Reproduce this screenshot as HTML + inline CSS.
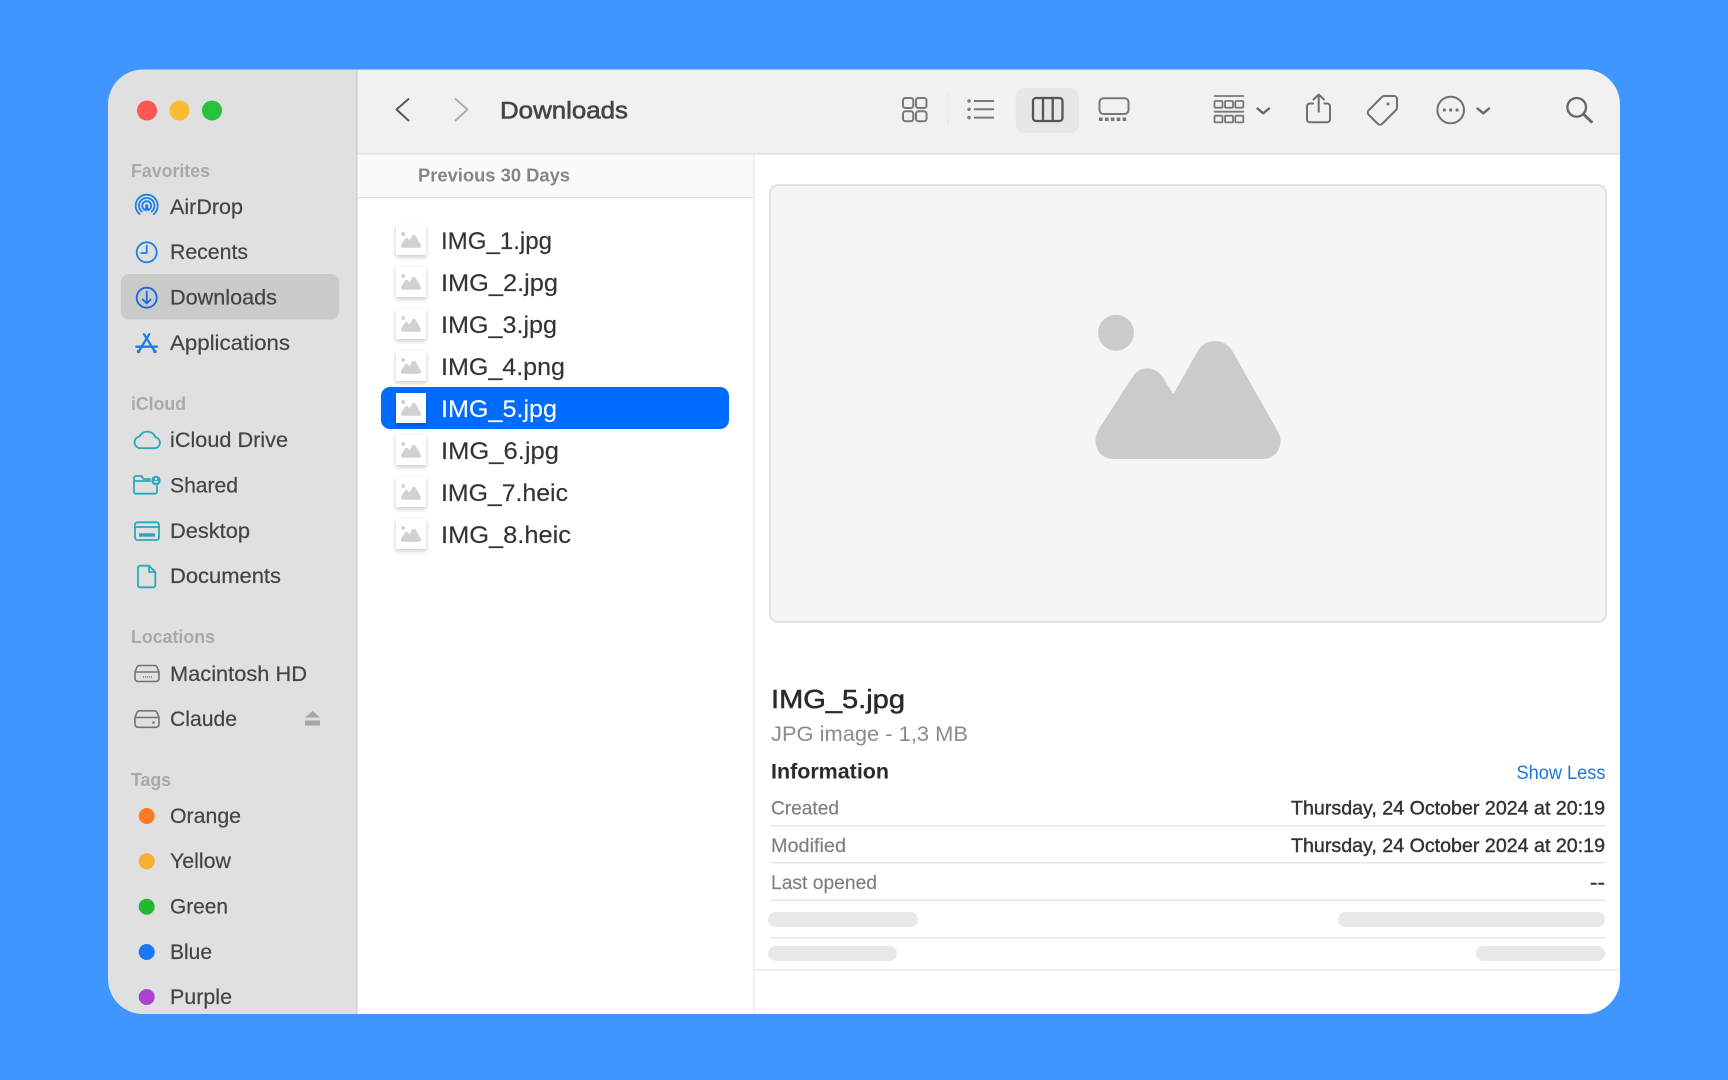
<!DOCTYPE html>
<html><head><meta charset="utf-8"><title>Finder - Downloads</title>
<style>
html,body{margin:0;padding:0;background:#3f96ff;width:1728px;height:1080px;overflow:hidden}
svg{display:block;position:absolute;left:0;top:0;filter:blur(.3px)}
text{font-family:"Liberation Sans",Arial,sans-serif;white-space:pre}
.s{font-size:21px;fill:#444;stroke:#444;stroke-width:.2px}
.h{font-size:18px;fill:#a9a9a9;font-weight:700}
.f{font-size:24.5px;fill:#333;stroke:#333;stroke-width:.15px}
.l{font-size:19px;fill:#7e7e7e;stroke:#7e7e7e;stroke-width:.15px}
.v{font-size:19px;fill:#333;stroke:#333;stroke-width:.4px}
.ic{fill:none;stroke-linecap:round;stroke-linejoin:round}
.fi{filter:drop-shadow(0 2px 2px rgba(0,0,0,.22))}
</style></head>
<body>
<svg width="1728" height="1080" viewBox="0 0 1728 1080" xmlns="http://www.w3.org/2000/svg">
<defs>
<clipPath id="win"><rect x="108" y="69.500" width="1512" height="944.500" rx="35"/></clipPath>
<g id="mt"><circle cx="1116" cy="332.700" r="18"/><path d="M1113 459H1263C1277 459 1285 444 1278 431.700L1231.700 350C1224 338 1206 338 1198.300 350L1173.300 394.300L1163.300 378.300C1156 365 1139 365 1131.700 378.300L1098.300 430C1091 444 1099 459 1113 459Z"/></g>
<g id="fic"><rect class="fi" x="396" y="225" width="30" height="30" fill="#fff"/><g fill="#d1d1d3" transform="translate(401 247.700) scale(.1087) translate(-1096 -459)"><use href="#mt"/></g></g>
</defs>
<g clip-path="url(#win)">
<rect x="357" y="150" width="1264" height="865" fill="#fff"/>
<rect x="108" y="69" width="249" height="945" fill="#e0e0e0"/>
<rect x="356" y="69" width="1.500" height="945" fill="#cfcfcf"/>
<rect x="357.500" y="69" width="1263" height="84" fill="#f2f1f1"/>
<rect x="357.500" y="153" width="1263" height="1.500" fill="#e1e1e1"/>
<rect x="357.500" y="154.500" width="396" height="42" fill="#fbfbfb"/>
<rect x="357.500" y="197" width="396" height="1.200" fill="#e2e2e2"/>
<rect x="753" y="154" width="1.500" height="860" fill="#ebebeb"/>
<rect x="754.500" y="969.300" width="866" height="1.300" fill="#e6e6e6"/>

<!-- traffic lights -->
<circle cx="147" cy="110.500" r="10" fill="#fb5753"/>
<circle cx="179.500" cy="110.500" r="10" fill="#fdbb33"/>
<circle cx="212" cy="110.500" r="10" fill="#2ac13f"/>

<!-- sidebar selection -->
<rect x="121" y="274" width="218" height="45.500" rx="8" fill="#c9caca"/>

<!-- sidebar text -->
<text class="h" x="131" y="177" textLength="79" lengthAdjust="spacingAndGlyphs">Favorites</text>
<text class="s" x="170" y="214" textLength="73" lengthAdjust="spacingAndGlyphs">AirDrop</text>
<text class="s" x="170" y="259" textLength="78" lengthAdjust="spacingAndGlyphs">Recents</text>
<text class="s" x="170" y="304.500" textLength="107" lengthAdjust="spacingAndGlyphs">Downloads</text>
<text class="s" x="170" y="350" textLength="120" lengthAdjust="spacingAndGlyphs">Applications</text>
<text class="h" x="131" y="410" textLength="55" lengthAdjust="spacingAndGlyphs">iCloud</text>
<text class="s" x="170" y="447" textLength="118" lengthAdjust="spacingAndGlyphs">iCloud Drive</text>
<text class="s" x="170" y="492.500" textLength="68" lengthAdjust="spacingAndGlyphs">Shared</text>
<text class="s" x="170" y="538" textLength="80" lengthAdjust="spacingAndGlyphs">Desktop</text>
<text class="s" x="170" y="583" textLength="111" lengthAdjust="spacingAndGlyphs">Documents</text>
<text class="h" x="131" y="643" textLength="84" lengthAdjust="spacingAndGlyphs">Locations</text>
<text class="s" x="170" y="681" textLength="137" lengthAdjust="spacingAndGlyphs">Macintosh HD</text>
<text class="s" x="170" y="726" textLength="67" lengthAdjust="spacingAndGlyphs">Claude</text>
<text class="h" x="131" y="786" textLength="40" lengthAdjust="spacingAndGlyphs">Tags</text>
<text class="s" x="170" y="823" textLength="71" lengthAdjust="spacingAndGlyphs">Orange</text>
<text class="s" x="170" y="868" textLength="61" lengthAdjust="spacingAndGlyphs">Yellow</text>
<text class="s" x="170" y="913.500" textLength="58" lengthAdjust="spacingAndGlyphs">Green</text>
<text class="s" x="170" y="959" textLength="42" lengthAdjust="spacingAndGlyphs">Blue</text>
<text class="s" x="170" y="1004" textLength="62" lengthAdjust="spacingAndGlyphs">Purple</text>

<!-- sidebar icons -->
<g class="ic" stroke="#1c80e6" stroke-width="1.800">
<path d="M139.600 214.100A11 11 0 1 1 153.800 214.100"/>
<path d="M141.750 211.600A7.700 7.700 0 1 1 151.650 211.600"/>
<path d="M143.800 209.150A4.500 4.500 0 1 1 149.600 209.150"/>
</g>
<path d="M146.700 204.200a1.700 1.700 0 0 1 1.300 2.800l2 3.800h-6.600l2-3.800a1.700 1.700 0 0 1 1.300-2.800z" fill="#1c80e6"/>
<g class="ic" stroke="#1f80e2" stroke-width="1.800"><circle cx="146.700" cy="252.300" r="10"/><path d="M146.700 245.500V253H141"/></g>
<g class="ic" stroke="#1668da" stroke-width="1.800"><circle cx="146.700" cy="297.700" r="10"/><path d="M146.700 291.700V303M142.800 299.600L146.700 303.400L150.600 299.600"/></g>
<g class="ic" stroke="#1c7ce8" stroke-width="2.300"><path d="M149.300 334.200L139.200 350.500M144 334.200L154.200 350.500M136.300 346.700H157"/></g>
<circle cx="138.500" cy="351.500" r="1.700" fill="#1c7ce8"/><circle cx="155" cy="351.500" r="1.700" fill="#1c7ce8"/>

<g class="ic" stroke="#2ba6bf" stroke-width="1.800">
<path d="M140 448.200H154.500A5.500 5.500 0 0 0 155.500 437.300A8.700 8.700 0 0 0 139.500 436.500A5.900 5.900 0 0 0 140 448.200Z"/>
<path d="M134 481V478a2 2 0 0 1 2-2H141.500l2 3H150M134 481H150M134 481V491.700a2 2 0 0 0 2 2H155a2 2 0 0 0 2-2V486"/>
<rect x="135" y="522.300" width="24" height="17.700" rx="2.500"/>
<path d="M135 527H159"/>
<path d="M140 565.700H149L155.300 572V585.300a2 2 0 0 1-2 2H140a2 2 0 0 1-2-2V567.700a2 2 0 0 1 2-2zM149 566V572H155"/>
</g>
<circle cx="156" cy="480.500" r="4.700" fill="#2ba6bf"/><circle cx="156" cy="479" r="1.200" fill="#e0e0e0"/><rect x="153.800" y="481" width="4.400" height="1.600" rx=".8" fill="#e0e0e0"/>
<rect x="139" y="533.300" width="16" height="3.400" fill="#2ba6bf"/>

<g class="ic" stroke="#737373" stroke-width="1.600">
<path d="M139.500 665.500H154.500a3 3 0 0 1 2.500 1.500L159 672V678.500a3 3 0 0 1-3 3H138a3 3 0 0 1-3-3V672L137 667a3 3 0 0 1 2.500-1.500zM135.500 672H158.500"/>
<path d="M143 677H152" stroke-dasharray="1 1" stroke-linecap="butt"/>
<path d="M139.500 710.800H154.500a3 3 0 0 1 2.500 1.500L159 717.500V724a3 3 0 0 1-3 3.300H138a3 3 0 0 1-3-3.300V717.500L137 712.300a3 3 0 0 1 2.500-1.500zM135.500 717.500H158.500"/>
</g>
<circle cx="153.500" cy="722.500" r="1.300" fill="#737373"/>
<path d="M312.500 711L320 717.500H305Z" fill="#a6a6a6"/><rect x="305" y="720.500" width="15" height="5" fill="#a6a6a6"/>

<circle cx="146.700" cy="816" r="8" fill="#f87a23"/>
<circle cx="146.700" cy="861.300" r="8" fill="#f4b02e"/>
<circle cx="146.700" cy="906.700" r="8" fill="#22b82f"/>
<circle cx="146.700" cy="952" r="8" fill="#1a76f5"/>
<circle cx="146.700" cy="997" r="8" fill="#a845d0"/>

<!-- toolbar -->
<g class="ic" stroke="#555" stroke-width="2"><path d="M408.500 99L396.500 109.500L408.500 120.500"/></g>
<g class="ic" stroke="#adadad" stroke-width="2"><path d="M455.500 99L467.500 109.500L455.500 120.500"/></g>
<text x="500" y="118.500" font-size="24.500" fill="#444" stroke="#444" stroke-width=".6" textLength="128" lengthAdjust="spacingAndGlyphs">Downloads</text>
<text x="418" y="181.500" font-size="18" fill="#858585" font-weight="700" textLength="152" lengthAdjust="spacingAndGlyphs">Previous 30 Days</text>

<g class="ic" stroke="#787878" stroke-width="2">
<rect x="903" y="98" width="10.300" height="10" rx="2.500"/><rect x="916" y="98" width="10.500" height="10" rx="2.500"/>
<rect x="903" y="111.300" width="10.300" height="10" rx="2.500"/><rect x="916" y="111.300" width="10.500" height="10" rx="2.500"/>
</g>
<rect x="947.500" y="94" width="1.200" height="32" fill="#e6e6e6"/>
<g fill="#787878"><circle cx="969" cy="101" r="1.700"/><circle cx="969" cy="109.300" r="1.700"/><circle cx="969" cy="117.600" r="1.700"/></g>
<path d="M974 101H994M974 109.300H994M974 117.600H994" stroke="#787878" stroke-width="2" fill="none"/>
<rect x="1015.700" y="88" width="63.300" height="45" rx="9" fill="#e7e7e7"/>
<g class="ic" stroke="#555" stroke-width="2.300"><rect x="1033" y="98" width="29.500" height="23" rx="3"/><path d="M1043 98V121M1052.700 98V121"/></g>
<g class="ic" stroke="#787878" stroke-width="2"><rect x="1099.500" y="98.300" width="29" height="15.700" rx="4"/></g>
<path d="M1099 119.300H1128.500" stroke="#787878" stroke-width="3.500" stroke-dasharray="3.600 2.300" fill="none"/>

<g class="ic" stroke="#787878" stroke-width="1.800">
<path d="M1214.500 96H1243.300M1214.500 111.700H1243.300"/>
<rect x="1214.500" y="101" width="8" height="6.700" rx="1"/><rect x="1225" y="101" width="8" height="6.700" rx="1"/><rect x="1235.300" y="101" width="8" height="6.700" rx="1"/>
<rect x="1214.500" y="115.700" width="8" height="6.700" rx="1"/><rect x="1225" y="115.700" width="8" height="6.700" rx="1"/><rect x="1235.300" y="115.700" width="8" height="6.700" rx="1"/>
</g>
<g class="ic" stroke="#666" stroke-width="2.400">
<path d="M1257.500 108.500L1263.300 113.300L1269 108.500"/>
<path d="M1477.500 108.500L1483.300 113.300L1489 108.500"/>
</g>
<g class="ic" stroke="#707070" stroke-width="2">
<path d="M1313 103.500H1310a3 3 0 0 0-3 3V119.300a3 3 0 0 0 3 3H1327a3 3 0 0 0 3-3V106.500a3 3 0 0 0-3-3H1324.500"/>
<path d="M1318.700 111.700V94.500M1313.500 99.500L1318.700 94.500L1324 99.500"/>
<path d="M1382 96.800L1368.500 110.500a3 3 0 0 0 0 4L1378 124a3 3 0 0 0 4 0L1396 110a3 3 0 0 0 1-2.500V99a3 3 0 0 0-3-3H1385a4 4 0 0 0-3 .8z"/>
<circle cx="1450.700" cy="110" r="13.300"/>
</g>
<circle cx="1388" cy="104" r="1.500" fill="#707070"/>
<g fill="#707070"><circle cx="1444.300" cy="110" r="1.600"/><circle cx="1450.700" cy="110" r="1.600"/><circle cx="1457" cy="110" r="1.600"/></g>
<g class="ic" stroke="#666" stroke-width="2.300"><circle cx="1576.700" cy="107.300" r="9.300"/><path d="M1583.300 114L1591.500 121.800" stroke-width="2.800"/></g>

<!-- file list -->
<rect x="381" y="387" width="348" height="42" rx="9" fill="#006bff"/>
<use href="#fic"/>
<use href="#fic" y="42"/>
<use href="#fic" y="84"/>
<use href="#fic" y="126"/>
<use href="#fic" y="168"/>
<use href="#fic" y="210"/>
<use href="#fic" y="252"/>
<use href="#fic" y="294"/>
<text class="f" x="441" y="248.800" textLength="111" lengthAdjust="spacingAndGlyphs">IMG_1.jpg</text>
<text class="f" x="441" y="290.800" textLength="117" lengthAdjust="spacingAndGlyphs">IMG_2.jpg</text>
<text class="f" x="441" y="332.800" textLength="116" lengthAdjust="spacingAndGlyphs">IMG_3.jpg</text>
<text class="f" x="441" y="374.800" textLength="124" lengthAdjust="spacingAndGlyphs">IMG_4.png</text>
<text class="f" x="441" y="416.800" textLength="116" lengthAdjust="spacingAndGlyphs" style="fill:#fff;stroke:#fff">IMG_5.jpg</text>
<text class="f" x="441" y="458.800" textLength="118" lengthAdjust="spacingAndGlyphs">IMG_6.jpg</text>
<text class="f" x="441" y="500.800" textLength="127" lengthAdjust="spacingAndGlyphs">IMG_7.heic</text>
<text class="f" x="441" y="542.800" textLength="130" lengthAdjust="spacingAndGlyphs">IMG_8.heic</text>

<!-- preview -->
<rect x="770" y="185" width="836" height="437" rx="8" fill="#f5f5f5" stroke="#dadada" stroke-width="1.500"/>
<g fill="#cbcbcd"><use href="#mt"/></g>

<!-- info -->
<text x="771" y="708" font-size="26" fill="#2a2a2a" stroke="#2a2a2a" stroke-width=".5" textLength="134" lengthAdjust="spacingAndGlyphs">IMG_5.jpg</text>
<text x="771" y="741" font-size="21.500" fill="#8b8b8b" textLength="197" lengthAdjust="spacingAndGlyphs">JPG image - 1,3 MB</text>
<text x="771" y="778.500" font-size="21" font-weight="700" fill="#2a2a2a" textLength="118" lengthAdjust="spacingAndGlyphs">Information</text>
<text x="1516.500" y="779" font-size="19" fill="#1f76d2" textLength="89" lengthAdjust="spacingAndGlyphs">Show Less</text>
<text class="l" x="771" y="814.500" textLength="68" lengthAdjust="spacingAndGlyphs">Created</text>
<text class="l" x="771" y="852" textLength="75" lengthAdjust="spacingAndGlyphs">Modified</text>
<text class="l" x="771" y="889" textLength="106" lengthAdjust="spacingAndGlyphs">Last opened</text>
<text class="v" x="1291" y="814.500" textLength="314" lengthAdjust="spacingAndGlyphs">Thursday, 24 October 2024 at 20:19</text>
<text class="v" x="1291" y="852" textLength="314" lengthAdjust="spacingAndGlyphs">Thursday, 24 October 2024 at 20:19</text>
<text class="v" x="1590" y="889" textLength="15" lengthAdjust="spacingAndGlyphs">--</text>
<g fill="#e8e8e8">
<rect x="770" y="825" width="836" height="1.500"/>
<rect x="770" y="862" width="836" height="1.500"/>
<rect x="770" y="899.500" width="836" height="1.500"/>
<rect x="770" y="937" width="836" height="1.500"/>
</g>
<g fill="#e8e8ea">
<rect x="768" y="912" width="150" height="15" rx="7.500"/>
<rect x="1338" y="912" width="267" height="15" rx="7.500"/>
<rect x="768" y="946" width="129" height="15" rx="7.500"/>
<rect x="1476" y="946" width="129" height="15" rx="7.500"/>
</g>
</g>
</svg>
</body></html>
